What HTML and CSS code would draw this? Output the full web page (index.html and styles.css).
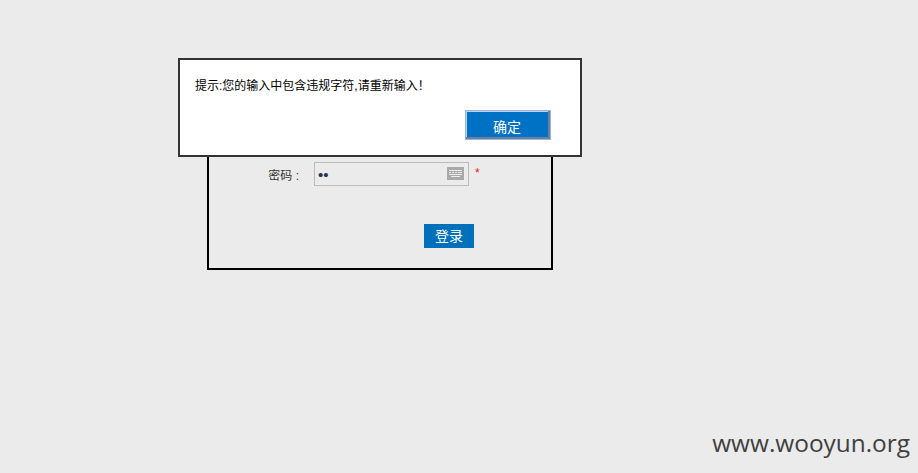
FILE: index.html
```html
<!DOCTYPE html>
<html lang="zh">
<head>
<meta charset="utf-8">
<title>登录</title>
<link rel="stylesheet" href="styles.css">
</head>
<body>
<main class="login">
  <div class="row">
    <label class="label" for="pw">密码 :</label>
    <div class="field">
      <input id="pw" class="input" type="text" value="••" readonly>
      <svg class="kbd" width="17" height="13" viewBox="0 0 17 13" aria-hidden="true">
        <rect width="17" height="13" fill="#a9a9a9"/>
        <path d="M2 3.500h13M2 5.500h2M5 5.500h2M8 5.500h2M11 5.500h4M2 7.500h13M4 9.500h9" stroke="#ececec" stroke-width="1" fill="none"/>
      </svg>
    </div>
    <span class="req">*</span>
  </div>
  <div class="actions"><button class="submit" type="button">登录</button></div>
</main>
<div class="dialog" role="alertdialog">
  <p class="msg">提示:您的输入中包含违规字符,请重新输入！</p>
  <div class="dialog-actions"><button class="ok" type="button">确定</button></div>
</div>
<div class="mark">www.wooyun.org</div>
</body>
</html>
```
FILE: styles.css
```css
* { box-sizing: border-box; }
html, body { height: 100%; }
body {
  margin: 0;
  background: #ebebeb;
  font-family: "Liberation Sans", "Noto Sans CJK SC", sans-serif;
  overflow: hidden;
  position: relative;
}
.login {
  width: 346px;
  height: 170px;
  margin: 100px 0 0 207px;
  border: 2px solid #000;
  padding-top: 60px;
}
.row { display: flex; align-items: center; height: 24px; }
.label {
  width: 90px;
  text-align: right;
  font-size: 12px;
  font-weight: 400;
  color: #333;
  margin-right: 15px;
  white-space: nowrap;
}
.field { position: relative; width: 155px; height: 24px; }
.input {
  display: block;
  width: 100%;
  height: 100%;
  border: 1px solid #bbb;
  background: #ebebeb;
  padding: 0 3px;
  font: 15px "Liberation Sans", sans-serif;
  color: #2a3340;
  outline: none;
}
.kbd { position: absolute; right: 5px; top: 5px; }
.req { color: #e2231a; font-size: 12px; margin: -3px 0 0 6px; }
.actions { display: flex; margin-top: 38px; padding-left: 215px; }
.submit {
  width: 50px;
  height: 24px;
  border: 0;
  padding: 0 0 2px;
  background: #0070bb;
  color: #fff;
  font: 14px "Noto Sans CJK SC", sans-serif;
}
.dialog {
  position: absolute;
  left: 178px;
  top: 58px;
  width: 404px;
  height: 99px;
  border: 2px solid #333;
  background: #fff;
  padding: 17px 29px 0 15px;
}
.msg {
  margin: 0;
  font-size: 12px;
  line-height: 18px;
  color: #000;
  white-space: nowrap;
}
.dialog-actions { display: flex; justify-content: flex-end; margin-top: 15px; }
.ok {
  width: 86px;
  height: 30px;
  padding: 2px 2px 0 0;
  border: 1px solid #8fb4ee;
  box-shadow: inset -2px -2px 0 #6f7f95, inset 1px 1px 0 #c5cfe2;
  background: #0072c6;
  color: #fff;
  font: 14px "Noto Sans CJK SC", sans-serif;
}
.mark {
  position: absolute;
  right: 8px;
  bottom: 14px;
  font: 24.400px "Open Sans", sans-serif;
  color: #404040;
}
```
